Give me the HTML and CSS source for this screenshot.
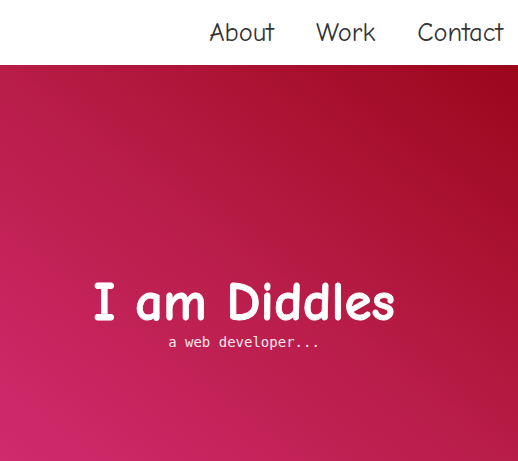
FILE: index.html
```html
<!DOCTYPE html>
<html lang="en">
<head>
<meta charset="utf-8">
<title>Diddles</title>
<link rel="stylesheet" href="styles.css">
</head>
<body>
<header class="site-header">
  <nav class="nav">
    <a class="nav-link" href="#about">About</a>
    <a class="nav-link" href="#work">Work</a>
    <a class="nav-link" href="#contact">Contact</a>
  </nav>
</header>
<section class="hero">
  <div class="hero-inner">
    <h1 class="hero-title">I am Diddles</h1>
    <p class="hero-sub">a web developer...</p>
  </div>
</section>
</body>
</html>
```
FILE: styles.css
```css
html, body {
  margin: 0;
  padding: 0;
  height: 100%;
}
body {
  font-family: "Comic Sans MS", "Comic Neue", cursive;
  background: #ffffff;
  display: flex;
  flex-direction: column;
}
.site-header {
  height: 65px;
  flex: none;
  display: flex;
  justify-content: flex-end;
  align-items: center;
}
.nav {
  display: flex;
  gap: 42px;
  padding-right: 15px;
}
.nav-link {
  color: #333333;
  text-decoration: none;
  font-size: 26.5px;
}
.hero {
  flex: 1;
  background: linear-gradient(to top right, #d02b6e 0%, #b81c47 50%, #9b071b 100%);
  display: flex;
  align-items: center;
  justify-content: center;
}
.hero-inner {
  text-align: center;
  margin-top: 96px;
  margin-right: 30px;
}
.hero-title {
  margin: 0;
  color: #ffffff;
  font-size: 55px;
  font-weight: 700;
  line-height: 1.1;
  -webkit-text-stroke: 0.8px #ffffff;
}
.hero-sub {
  margin: 2px 0 0;
  color: #f6e6ec;
  font-family: "DejaVu Sans Mono", monospace;
  font-size: 14px;
}
```
